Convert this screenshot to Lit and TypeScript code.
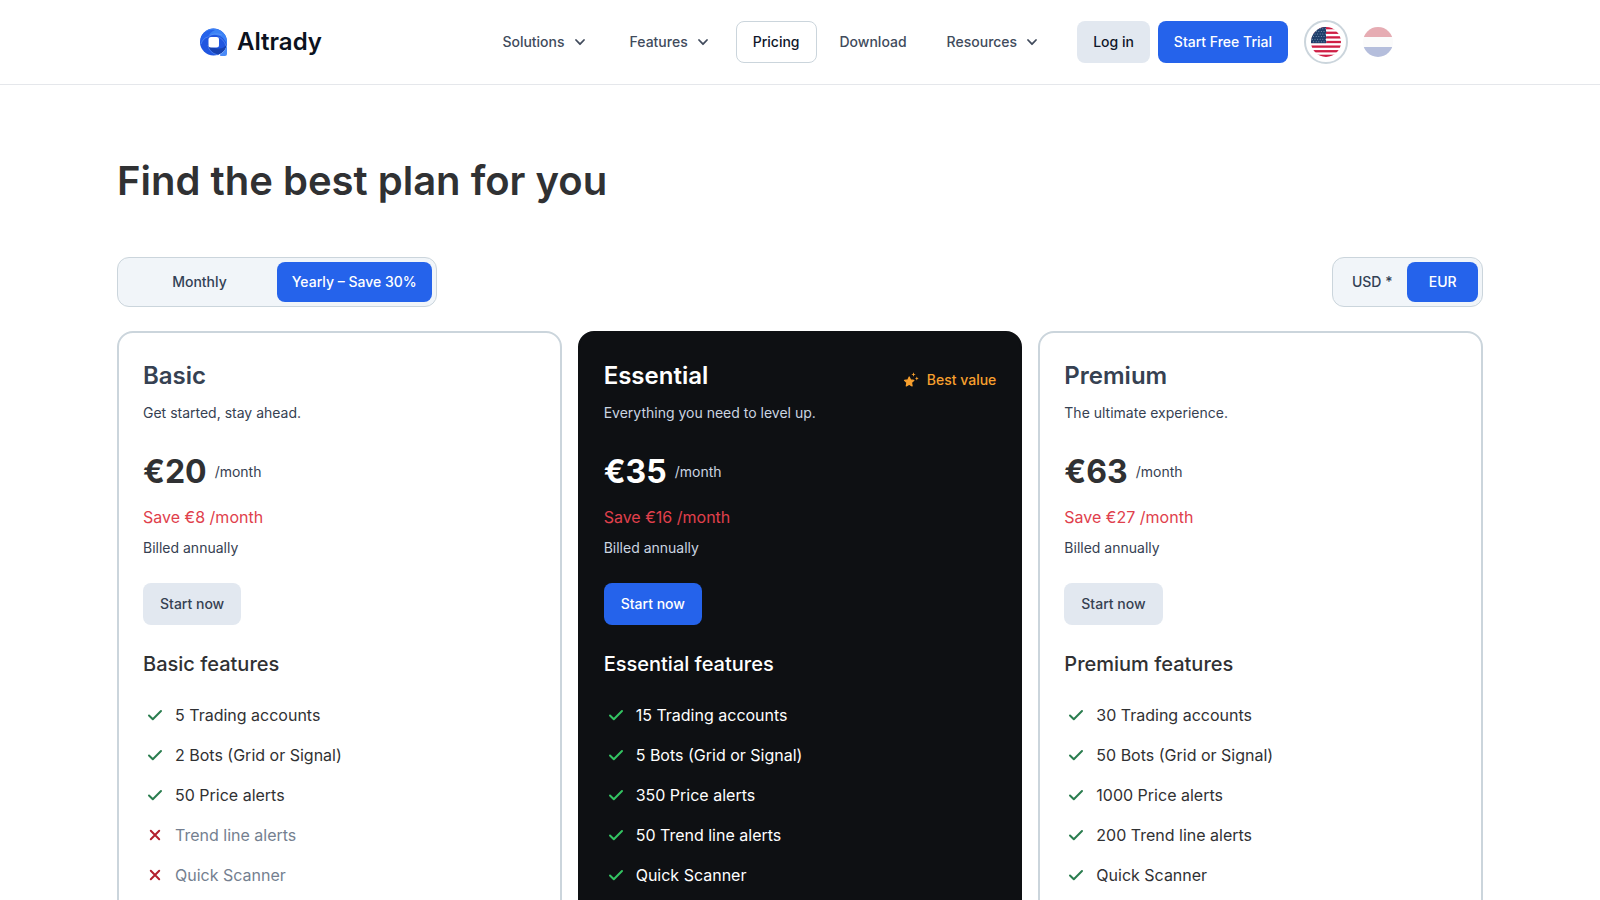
import { LitElement, html, css, svg, nothing } from "lit";
import { customElement, property, state } from "lit/decorators.js";

interface Feature {
  label: string;
  included: boolean;
}

interface Plan {
  name: string;
  tagline: string;
  price: number;
  saving: number;
  featured: boolean;
  features: Feature[];
}

const yes = (label: string): Feature => ({ label, included: true });
const no = (label: string): Feature => ({ label, included: false });

const PLANS: Plan[] = [
  {
    name: "Basic",
    tagline: "Get started, stay ahead.",
    price: 20,
    saving: 8,
    featured: false,
    features: [
      yes("5 Trading accounts"),
      yes("2 Bots (Grid or Signal)"),
      yes("50 Price alerts"),
      no("Trend line alerts"),
      no("Quick Scanner"),
    ],
  },
  {
    name: "Essential",
    tagline: "Everything you need to level up.",
    price: 35,
    saving: 16,
    featured: true,
    features: [
      yes("15 Trading accounts"),
      yes("5 Bots (Grid or Signal)"),
      yes("350 Price alerts"),
      yes("50 Trend line alerts"),
      yes("Quick Scanner"),
    ],
  },
  {
    name: "Premium",
    tagline: "The ultimate experience.",
    price: 63,
    saving: 27,
    featured: false,
    features: [
      yes("30 Trading accounts"),
      yes("50 Bots (Grid or Signal)"),
      yes("1000 Price alerts"),
      yes("200 Trend line alerts"),
      yes("Quick Scanner"),
    ],
  },
];

const NAV = [
  { label: "Solutions", menu: true },
  { label: "Features", menu: true },
  { label: "Pricing", menu: false, active: true },
  { label: "Download", menu: false },
  { label: "Resources", menu: true },
];

const base = css`
  * {
    box-sizing: border-box;
    margin: 0;
    padding: 0;
  }
  svg {
    display: block;
    flex: none;
  }
  button {
    font: inherit;
    border: 0;
    cursor: pointer;
    white-space: nowrap;
  }
  a {
    color: inherit;
    text-decoration: none;
    white-space: nowrap;
  }
`;

@customElement("site-header")
export class SiteHeader extends LitElement {
  static styles = [
    base,
    css`
      :host {
        display: block;
        border-bottom: 1px solid #e5e7eb;
      }
      .bar {
        display: flex;
        align-items: center;
        max-width: 1200px;
        height: 84px;
        margin: 0 auto;
      }
      .brand {
        display: flex;
        align-items: center;
        gap: 10px;
        color: #0b1220;
        font-size: 24px;
        line-height: 32px;
        font-weight: 600;
      }
      .nav {
        display: flex;
        gap: 6px;
        margin-left: auto;
        margin-right: 18px;
      }
      .item {
        display: flex;
        align-items: center;
        gap: 5px;
        height: 42px;
        padding: 0 16px;
        border: 1px solid transparent;
        border-radius: 8px;
        background: none;
        color: #414b5c;
        font-weight: 500;
      }
      .item.active {
        border-color: #cbd5dc;
        color: #0f172a;
      }
      .actions {
        display: flex;
        align-items: center;
        gap: 8px;
      }
      .action {
        display: flex;
        align-items: center;
        height: 42px;
        padding: 0 16px;
        border-radius: 8px;
        background: #e2e8f0;
        color: #0f172a;
        font-weight: 500;
      }
      .action.primary {
        background: #2563eb;
        color: #ffffff;
      }
      .langs {
        display: flex;
        gap: 8px;
        margin-left: 8px;
      }
      .lang {
        display: grid;
        place-items: center;
        width: 44px;
        height: 44px;
        border: 2px solid transparent;
        border-radius: 50%;
        background: none;
      }
      .lang.active {
        border-color: #cbd5dc;
      }
      .lang.muted svg {
        opacity: 0.35;
      }
    `,
  ];

  private usFlag() {
    const stars = [];
    for (let row = 0; row < 6; row++) {
      for (let col = 0; col < 6; col++) {
        stars.push(
          svg`<circle cx=${1.4 + col * 2.6 + (row % 2) * 1.2} cy=${1.8 + row * 2.6} r="0.5" fill="#8fa6c0"></circle>`
        );
      }
    }
    return html`<svg width="30" height="30" viewBox="0 0 30 30" aria-hidden="true">
      <defs><clipPath id="us"><circle cx="15" cy="15" r="15"></circle></clipPath></defs>
      <g clip-path="url(#us)">
        <rect width="30" height="30" fill="#ffffff"></rect>
        ${[0, 1, 2, 3, 4, 5, 6].map(
          (i) => svg`<rect y=${(i * 60) / 13} width="30" height=${30 / 13} fill="#cf1f45"></rect>`
        )}
        <rect width="15" height="16.15" fill="#1f3f6b"></rect>
        ${stars}
      </g>
    </svg>`;
  }

  private nlFlag() {
    return html`<svg width="30" height="30" viewBox="0 0 30 30" aria-hidden="true">
      <defs><clipPath id="nl"><circle cx="15" cy="15" r="15"></circle></clipPath></defs>
      <g clip-path="url(#nl)">
        <rect width="30" height="30" fill="#f4f4f6"></rect>
        <rect width="30" height="10" fill="#b91528"></rect>
        <rect y="20" width="30" height="10" fill="#2f479c"></rect>
      </g>
    </svg>`;
  }

  render() {
    return html`
      <header class="bar">
        <a class="brand" href="#">
          <svg width="27" height="28" viewBox="0 0 27 28" aria-hidden="true">
            <circle cx="13.5" cy="14" r="13.5" fill="#2056e0"></circle>
            <path d="M7 2.2Q13 -1 20 2.2Q27 6 27 14V18Q25 8 16 7Q10 6 5 10Q4 5 7 2.2Z" fill="#3b82f6"></path>
            <path d="M4 5Q9 1 15 2Q10 4 8 9Q3 10 1 17Q-1 10 4 5Z" fill="#2563eb"></path>
            <path d="M26.8 16Q24 21 18 20.5Q10 20 8 15Q8 24 18 26.8Q26 24 26.8 16Z" fill="#1741b0"></path>
            <path d="M27 16V26Q27 28 25 28H21Q19 27.5 20.5 26Q26 22.5 27 16Z" fill="#4b8bf8"></path>
            <path d="M1 16Q3 10 8 9M8 17Q9 25 18 27M18 9Q24 11 26 18M8 9Q14 4 22 7" fill="none" stroke="#6ea0fb" stroke-width="0.5"></path>
            <rect x="8.5" y="9" width="10.5" height="10.5" rx="2.5" fill="#ffffff"></rect>
          </svg>
          <span>Altrady</span>
        </a>
        <nav class="nav" aria-label="Main">
          ${NAV.map((item) =>
            item.menu
              ? html`<button class="item" type="button" aria-haspopup="true">
                  ${item.label}
                  <svg width="20" height="20" viewBox="0 0 20 20" aria-hidden="true">
                    <path d="M6 8L10 12.2L14 8" fill="none" stroke="#414b5c" stroke-width="1.8" stroke-linecap="round" stroke-linejoin="round"></path>
                  </svg>
                </button>`
              : html`<a class="item ${item.active ? "active" : ""}" href="#">${item.label}</a>`
          )}
        </nav>
        <div class="actions">
          <a class="action" href="#">Log in</a>
          <a class="action primary" href="#">Start Free Trial</a>
          <div class="langs">
            <button class="lang active" type="button" aria-label="English">${this.usFlag()}</button>
            <button class="lang muted" type="button" aria-label="Nederlands">${this.nlFlag()}</button>
          </div>
        </div>
      </header>
    `;
  }
}

@customElement("segmented-control")
export class SegmentedControl extends LitElement {
  @property({ attribute: false }) options: string[] = [];
  @property({ type: Number }) selected = 0;

  static styles = [
    base,
    css`
      :host {
        display: block;
      }
      .track {
        display: grid;
        grid-auto-flow: column;
        grid-auto-columns: 1fr;
        padding: 4px;
        border: 1px solid #cbd5dc;
        border-radius: 12px;
        background: #f1f5f9;
      }
      .segment {
        height: 40px;
        padding: 0 15px;
        border-radius: 8px;
        background: none;
        color: #334155;
        font-weight: 500;
      }
      .segment.on {
        background: #2563eb;
        color: #ffffff;
      }
    `,
  ];

  render() {
    return html`<div class="track" role="group">
      ${this.options.map(
        (label, i) => html`<button
          class="segment ${i === this.selected ? "on" : ""}"
          type="button"
          aria-pressed=${i === this.selected}
          @click=${() => (this.selected = i)}
        >${label}</button>`
      )}
    </div>`;
  }
}

@customElement("plan-card")
export class PlanCard extends LitElement {
  @property({ attribute: false }) plan!: Plan;

  static styles = [
    base,
    css`
      :host {
        display: block;
      }
      .card {
        padding: 26px 24px 64px;
        border: 2px solid #cbd5dc;
        border-radius: 16px;
        color: #303133;
      }
      .head {
        display: flex;
        justify-content: space-between;
        align-items: center;
      }
      .name {
        color: #364152;
        font-size: 24px;
        line-height: 34px;
        font-weight: 600;
      }
      .best {
        display: flex;
        align-items: center;
        gap: 8px;
        padding-top: 8px;
        color: #f8a02e;
        line-height: 24px;
        font-weight: 500;
      }
      .note {
        color: #364152;
        line-height: 20px;
      }
      .tagline {
        margin-top: 10px;
      }
      .price {
        display: flex;
        align-items: center;
        gap: 8px;
        margin-top: 28px;
      }
      .amount {
        font-size: 32px;
        line-height: 42px;
        font-weight: 700;
      }
      .saving {
        margin-top: 12px;
        color: #e0404c;
        font-size: 16px;
        line-height: 24px;
      }
      .billed {
        margin-top: 8px;
        line-height: 22px;
      }
      .start {
        height: 42px;
        margin-top: 24px;
        padding: 0 17px;
        border-radius: 8px;
        background: #e2e8f0;
        color: #364152;
        font-weight: 500;
      }
      .subtitle {
        margin-top: 24px;
        font-size: 20px;
        line-height: 30px;
        font-weight: 500;
      }
      .list {
        display: grid;
        gap: 16px;
        margin-top: 24px;
        list-style: none;
        font-size: 16px;
        line-height: 24px;
      }
      .feature {
        display: flex;
        gap: 8px;
        color: #303133;
      }
      .feature.off {
        color: #757f90;
      }
      .tick {
        stroke: #2a7d4f;
      }
      .cross {
        stroke: #b3202e;
      }
      .featured {
        border-color: #0e1013;
        background: #0e1013;
        color: #ffffff;
      }
      .featured .name,
      .featured .feature {
        color: #ffffff;
      }
      .featured .note {
        color: #cbd5e1;
      }
      .featured .start {
        background: #2563eb;
        color: #ffffff;
      }
      .featured .tick {
        stroke: #34c463;
      }
    `,
  ];

  private mark(included: boolean) {
    return included
      ? html`<svg width="24" height="24" viewBox="0 0 24 24" role="img" aria-label="Included">
          <path class="tick" d="M6 12.5L9.8 16.3L18 8" fill="none" stroke-width="2" stroke-linecap="round" stroke-linejoin="round"></path>
        </svg>`
      : html`<svg width="24" height="24" viewBox="0 0 24 24" role="img" aria-label="Not included">
          <path class="cross" d="M7.8 7.8L16.2 16.2M16.2 7.8L7.8 16.2" fill="none" stroke-width="2" stroke-linecap="round"></path>
        </svg>`;
  }

  render() {
    const p = this.plan;
    return html`<article class="card ${p.featured ? "featured" : ""}">
      <div class="head">
        <h2 class="name">${p.name}</h2>
        ${p.featured
          ? html`<span class="best">
              <svg width="16" height="16" viewBox="0 0 16 16" fill="#f8a02e" aria-hidden="true">
                <path d="M6.2 5L7.6 7.9L10.9 8.3L8.5 10.6L9.1 13.9L6.2 12.3L3.3 13.9L3.9 10.6L1.5 8.3L4.8 7.9Z" stroke="#f8a02e" stroke-width="1.2" stroke-linejoin="round"></path>
                <path d="M10.5 0.3L11.1 1.9L12.7 2.5L11.1 3.1L10.5 4.7L9.9 3.1L8.3 2.5L9.9 1.9Z"></path>
                <path d="M13.8 4.6L14.4 5.9L15.7 6.5L14.4 7.1L13.8 8.4L13.2 7.1L11.9 6.5L13.2 5.9Z"></path>
              </svg>
              Best value
            </span>`
          : nothing}
      </div>
      <p class="note tagline">${p.tagline}</p>
      <p class="price">
        <span class="amount">€${p.price}</span>
        <span class="note">/month</span>
      </p>
      <p class="saving">Save €${p.saving} /month</p>
      <p class="note billed">Billed annually</p>
      <button class="start" type="button">Start now</button>
      <h3 class="subtitle">${p.name} features</h3>
      <ul class="list">
        ${p.features.map(
          (f) => html`<li class="feature ${f.included ? "" : "off"}">
            ${this.mark(f.included)}<span>${f.label}</span>
          </li>`
        )}
      </ul>
    </article>`;
  }
}

@customElement("app-root")
export class AppRoot extends LitElement {
  @state() private billing = ["Monthly", "Yearly – Save 30%"];
  @state() private currencies = ["USD *", "EUR"];

  static styles = [
    base,
    css`
      :host {
        display: block;
        height: 100vh;
        overflow: hidden;
        background: #ffffff;
        font-family: Inter, "Noto Sans", sans-serif;
        font-size: 14px;
        line-height: 20px;
      }
      .page {
        max-width: 1366px;
        margin: 0 auto;
        padding-top: 72px;
      }
      .title {
        color: #303133;
        font-size: 40px;
        line-height: 48px;
        font-weight: 600;
      }
      .controls {
        display: flex;
        justify-content: space-between;
        margin-top: 52px;
      }
      .plans {
        display: grid;
        grid-template-columns: repeat(3, 1fr);
        gap: 16px;
        margin-top: 24px;
      }
    `,
  ];

  render() {
    return html`
      <site-header></site-header>
      <main class="page">
        <h1 class="title">Find the best plan for you</h1>
        <div class="controls">
          <segmented-control .options=${this.billing} .selected=${1}></segmented-control>
          <segmented-control .options=${this.currencies} .selected=${1}></segmented-control>
        </div>
        <section class="plans" aria-label="Plans">
          ${PLANS.map((plan) => html`<plan-card .plan=${plan}></plan-card>`)}
        </section>
      </main>
    `;
  }
}
